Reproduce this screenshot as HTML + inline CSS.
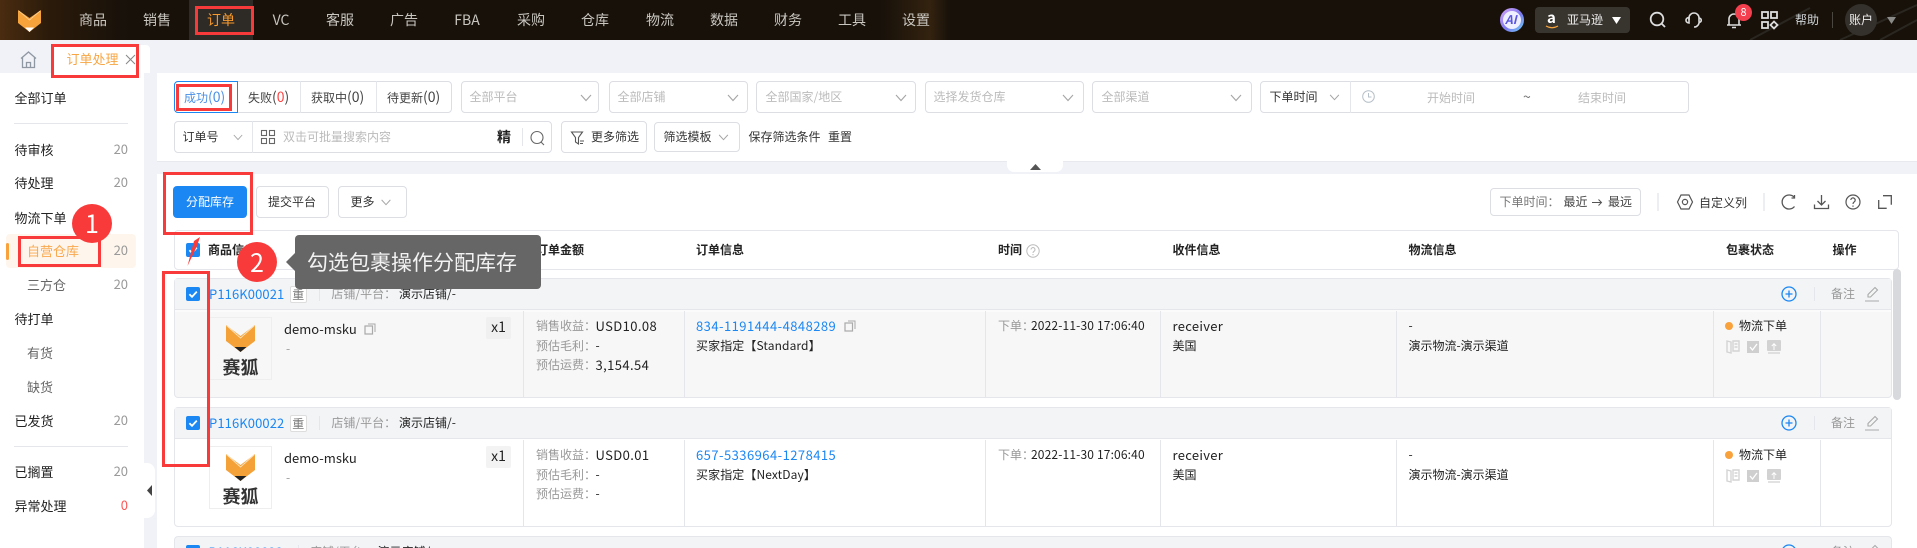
<!DOCTYPE html>
<html lang="zh"><head><meta charset="utf-8"><title>订单处理</title>
<style>
*{box-sizing:border-box}
html,body{margin:0;padding:0;width:1917px;height:548px;overflow:hidden;background:#fff}
body{position:relative;font:12px/20px "Noto Sans CJK SC","Liberation Sans",sans-serif;color:#222}
.a,.t,.n{position:absolute}
.t{white-space:nowrap;line-height:20px;height:20px}
.g{color:#999}.pg{color:#bbb}.b{font-weight:700}.l{color:#1b87f3}.f13{font-size:13px}
.n{top:10px;line-height:20px;font-size:14px;color:#c9c6c0;width:50px;text-align:center;white-space:nowrap}
.box{position:absolute;border:1px solid #dcdee4;border-radius:4px;background:#fff}
.sel{top:81px;height:32px}
.red{position:absolute;border:3px solid #f93a3a;z-index:5}
.sep{position:absolute;background:#e4e6eb;width:1px}
.hl{position:absolute;background:#e4e6eb;height:1px}
.num{position:absolute;left:100px;width:28px;text-align:right;color:#999;font-size:13px;line-height:20px}
svg{position:absolute;overflow:visible}
.p{font-size:14px}
.m{font-size:13px;letter-spacing:.4px}
.lk{font-size:13px;letter-spacing:.45px;color:#1b87f3}
</style></head><body>
<svg width="0" height="0" style="position:absolute"><defs>
<symbol id="ch" viewBox="0 0 12 8"><polyline points="1,1 6,6.5 11,1" fill="none" stroke="#a5a5a5" stroke-width="1.1"/></symbol>
<symbol id="ck" viewBox="0 0 14 14"><rect width="14" height="14" rx="2" fill="#1b87f3"/><polyline points="3.4,7.2 6,9.8 10.8,4.6" fill="none" stroke="#fff" stroke-width="1.8"/></symbol>
<symbol id="fox" viewBox="0 0 29 27"><polygon points="0,0 14.5,11 29,0 29,16 14.5,27 0,16" fill="#f4a137"/><polyline points="0.5,0.5 14.5,13 28.5,0.5" fill="none" stroke="#fbe0b8" stroke-width="1"/><polygon points="8.5,22 20.5,22 14.5,27" fill="#222"/></symbol>
<symbol id="cp" viewBox="0 0 12 12"><rect x="1" y="3" width="7.5" height="8" fill="none" stroke="#aaa" stroke-width="1.2"/><polyline points="4,1 11,1 11,9" fill="none" stroke="#aaa" stroke-width="1"/></symbol>
<symbol id="plus" viewBox="0 0 16 16"><circle cx="8" cy="8" r="7" fill="none" stroke="#1b87f3" stroke-width="1.3"/><path d="M4.5 8h7M8 4.5v7" stroke="#1b87f3" stroke-width="1.3"/></symbol>
<symbol id="pen" viewBox="0 0 14 16"><path d="M0 15h14M3 11V8.5L10 1.5l2.5 2.5-7 7z" fill="none" stroke="#aaa" stroke-width="1.1"/></symbol>
<symbol id="st" viewBox="0 0 55 14"><path d="M1 1l4 1v11l-4-1zM7 1h6v10H7zM8.500 4h3M8.500 7h3" fill="none" stroke="#d4d4d4" stroke-width="1.4"/><rect x="21" y="1" width="12" height="12" fill="#cfcfcf"/><polyline points="24,7 26.500,10 31,4" fill="none" stroke="#fff" stroke-width="1.300"/><rect x="41" y="0" width="14" height="11" rx="1" fill="#d2d2d2"/><path d="M48 10V4M45.800 6l2.200-2.300 2.200 2.300" fill="none" stroke="#fff" stroke-width="1"/><path d="M42 13h12" stroke="#d2d2d2" stroke-width="1.300"/></symbol>
</defs></svg>

<!-- top nav -->
<div class="a" style="left:0;top:0;width:1917px;height:40px;background:linear-gradient(90deg,#4a2c10 0,#2a1a0a 50px,#17110a 130px,#17110a 880px,#33220f 930px,#17110a 950px,#17110a 100%)"></div>
<svg style="left:1750px;top:0" width="167" height="40"><path d="M0 40L60 8M90 40L167 5M130 40L167 20" stroke="#2a2620" stroke-width="2" fill="none"/></svg>
<div class="a" style="left:189px;top:0;width:64px;height:40px;background:#2e2a25"></div>
<svg style="left:17.5px;top:10px" width="23" height="22" viewBox="0 0 23 22"><polygon points="0,0 11.500,8 23,0 23,13 11.500,22 0,13" fill="#f6a33c"/><polyline points="1,1 11.500,10 22,1" fill="none" stroke="#ffd9a0" stroke-width=".7"/><polygon points="7,17.500 16,17.500 11.500,22" fill="#fff"/></svg>
<div class="n" style="left:68px">商品</div><div class="n" style="left:132px">销售</div><div class="n" style="left:196px;color:#f59a2f">订单</div><div class="n" style="left:256px">VC</div><div class="n" style="left:315px">客服</div><div class="n" style="left:379px">广告</div><div class="n" style="left:442px">FBA</div><div class="n" style="left:506px">采购</div><div class="n" style="left:570px">仓库</div><div class="n" style="left:635px">物流</div><div class="n" style="left:699px">数据</div><div class="n" style="left:763px">财务</div><div class="n" style="left:827px">工具</div><div class="n" style="left:891px">设置</div>
<div class="red" style="left:195px;top:6px;width:59px;height:29px"></div>

<div class="a" style="left:1500px;top:8px;width:24px;height:24px;border-radius:50%;background:linear-gradient(135deg,#d9a6f5,#7b78f0 55%,#6fd3f5);"></div>
<div class="a" style="left:1503px;top:11px;width:18px;height:18px;border-radius:50%;background:#eef0ff"></div>
<div class="t b" style="left:1505px;top:10px;font-size:12px;color:#5a55e0;font-style:italic">AI</div>
<div class="a" style="left:1535px;top:7px;width:95px;height:26px;border-radius:4px;background:#38342e"></div>
<div class="t b" style="left:1547px;top:8px;font-size:15px;color:#fff">a</div>
<svg style="left:1545px;top:25px" width="14" height="5"><path d="M1 1q6 3.500 12 0" stroke="#f6a33c" stroke-width="1.300" fill="none"/></svg>
<div class="t" style="left:1567px;top:10px;color:#eee">亚马逊</div>
<svg style="left:1612px;top:17px" width="10" height="8"><polygon points="0,0 9,0 4.500,7" fill="#fff"/></svg>
<svg style="left:1649px;top:11px" width="18" height="18" fill="none" stroke="#ddd" stroke-width="1.800"><circle cx="8" cy="8" r="6.300"/><path d="M12.500 12.500L16 16"/></svg>
<svg style="left:1685px;top:11px" width="18" height="18" fill="none" stroke="#ddd" stroke-width="1.600"><path d="M4 9V7a5 5 0 0 1 10 0v3a5 5 0 0 1-5 6"/><path d="M4 6.500c-4 .5-4 5 0 5.500z"/><path d="M14 7c3 .5 3 4 0 4.500"/></svg>
<svg style="left:1725px;top:11px" width="18" height="18" fill="none" stroke="#ddd" stroke-width="1.600"><path d="M2 14h14M4 14V8a5 5 0 0 1 10 0v6M7 16.500h4"/></svg>
<div class="a" style="left:1735px;top:4px;width:17px;height:17px;border-radius:50%;background:#f43f4e;color:#fff;font-size:11px;line-height:16px;text-align:center">8</div>
<svg style="left:1761px;top:11px" width="18" height="19" fill="none" stroke="#ddd" stroke-width="1.800"><rect x="1" y="1" width="6" height="6"/><rect x="10" y="1" width="6" height="6"/><rect x="1" y="11" width="6" height="6"/><path d="M13 10.500l3.500 3.500-3.500 3.500-3.500-3.500z"/></svg>
<div class="t" style="left:1795px;top:10px;color:#cfd3d6">帮助</div>
<div class="a" style="left:1832px;top:12px;width:1px;height:16px;background:#4a4640"></div>
<div class="a" style="left:1845px;top:4px;width:32px;height:32px;border-radius:50%;background:#34302b"></div>
<div class="t" style="left:1849px;top:10px;color:#eee">账户</div>
<svg style="left:1887px;top:17px" width="10" height="8"><polygon points="0,0 9,0 4.500,7" fill="#8a8a88"/></svg>

<!-- tab bar -->
<div class="a" style="left:0;top:40px;width:1917px;height:33px;background:#f0f2f7"></div>
<svg style="left:20px;top:51px" width="17" height="18" fill="none" stroke="#8f97a3" stroke-width="1.300"><path d="M1 7.500L8.500 1 16 7.500M2.500 6.500V16.500h12V6.500"/><path d="M6.500 16.500v-5h4v5"/></svg>
<div class="a" style="left:52px;top:45px;width:98px;height:28px;background:#fff;border-radius:4px 4px 0 0"></div>
<div class="t f13" style="left:66.500px;top:49px;color:#f8a644">订单处理</div>
<svg style="left:126px;top:55px" width="9" height="9" stroke="#888" stroke-width="1"><path d="M0 0l9 9M9 0L0 9"/></svg>
<div class="red" style="left:51px;top:44px;width:88px;height:34px"></div>

<!-- layout blocks -->
<div class="a" style="left:144px;top:73px;width:13px;height:475px;background:#f0f2f7"></div>
<div class="a" style="left:157px;top:161px;width:1760px;height:13px;background:#f0f2f7;border-top:1px solid #e8e9ee"></div>
<div class="a" style="left:1007px;top:161px;width:56px;height:11px;background:#fff;border-radius:0 0 7px 7px"></div>
<svg style="left:1030px;top:164px" width="11" height="6"><polygon points="0,6 5.500,0 11,6" fill="#555"/></svg>

<!-- sidebar -->
<div class="t f13" style="left:14.500px;top:88px">全部订单</div>
<div class="hl" style="left:14px;top:123px;width:114px"></div>
<div class="t f13" style="left:14.500px;top:140px">待审核</div><div class="num" style="top:139px">20</div>
<div class="t f13" style="left:14.500px;top:173px">待处理</div><div class="num" style="top:172px">20</div>
<div class="t f13" style="left:14.500px;top:208px">物流下单</div>
<div class="a" style="left:6px;top:234px;width:130px;height:34px;background:#fef6ec;border-radius:4px"></div>
<div class="a" style="left:6px;top:243px;width:3px;height:17px;background:#f9a23c;border-radius:2px"></div>
<div class="t f13" style="left:27px;top:241px;color:#f9a84e">自营仓库</div><div class="num" style="top:240px">20</div>
<div class="t f13" style="left:27px;top:275px;color:#666">三方仓</div><div class="num" style="top:274px">20</div>
<div class="t f13" style="left:14.500px;top:309px">待打单</div>
<div class="t f13" style="left:27px;top:343px;color:#666">有货</div>
<div class="t f13" style="left:27px;top:377px;color:#666">缺货</div>
<div class="t f13" style="left:14.500px;top:411px">已发货</div><div class="num" style="top:410px">20</div>
<div class="hl" style="left:14px;top:446px;width:114px"></div>
<div class="t f13" style="left:14.500px;top:462px">已搁置</div><div class="num" style="top:461px">20</div>
<div class="t f13" style="left:14.500px;top:496px">异常处理</div><div class="num" style="top:495px;color:#f55">0</div>
<div class="a" style="left:144px;top:463px;width:11px;height:55px;background:#fff;border-radius:0 8px 8px 0"></div>
<svg style="left:147px;top:485px" width="5" height="11"><polygon points="5,0 0,5.500 5,11" fill="#444"/></svg>

<!-- filters row 1 -->
<div class="box sel" style="left:173.500px;width:278px"></div>
<div class="a" style="left:173.500px;top:81px;width:64.500px;height:32px;border:1px solid #1b87f3;border-radius:4px 0 0 4px"></div>
<div class="sep" style="left:300px;top:81px;height:32px"></div><div class="sep" style="left:376px;top:81px;height:32px"></div>
<div class="t" style="left:184px;top:87px;color:#4a90e8">成功<span class="p">(0)</span></div>
<div class="t" style="left:248px;top:87px;color:#444">失败<span class="p">(<span style="color:#f44">0</span>)</span></div>
<div class="t" style="left:311px;top:87px;color:#444">获取中<span class="p">(0)</span></div>
<div class="t" style="left:387px;top:87px;color:#444">待更新<span class="p">(0)</span></div>
<div class="red" style="left:175.500px;top:84px;width:56.500px;height:27px"></div>

<div class="box sel" style="left:460.500px;width:138.500px"></div><div class="t pg" style="left:469.500px;top:87px">全部平台</div><svg style="left:580px;top:94px" width="12" height="8"><use href="#ch"/></svg>
<div class="box sel" style="left:608.500px;width:139.500px"></div><div class="t pg" style="left:617.500px;top:87px">全部店铺</div><svg style="left:727px;top:94px" width="12" height="8"><use href="#ch"/></svg>
<div class="box sel" style="left:756px;width:159.500px"></div><div class="t pg" style="left:765.500px;top:87px">全部国家/地区</div><svg style="left:895px;top:94px" width="12" height="8"><use href="#ch"/></svg>
<div class="box sel" style="left:924.500px;width:159px"></div><div class="t pg" style="left:933.500px;top:87px">选择发货仓库</div><svg style="left:1062px;top:94px" width="12" height="8"><use href="#ch"/></svg>
<div class="box sel" style="left:1092px;width:159.500px"></div><div class="t pg" style="left:1101.500px;top:87px">全部渠道</div><svg style="left:1230px;top:94px" width="12" height="8"><use href="#ch"/></svg>
<div class="box sel" style="left:1260px;width:428.500px"></div><div class="t" style="left:1269.500px;top:87px;color:#333">下单时间</div><svg style="left:1329px;top:94px" width="11" height="7"><use href="#ch"/></svg>
<div class="sep" style="left:1349.500px;top:81px;height:32px"></div>
<svg style="left:1361.500px;top:90px" width="13" height="13" fill="none" stroke="#b6c0c8"><circle cx="6.500" cy="6.500" r="5.800"/><path d="M6.500 3v4h3"/></svg>
<div class="t pg" style="left:1427px;top:87.500px">开始时间</div><div class="t" style="left:1523px;top:87px;color:#777;font-size:14px">~</div><div class="t pg" style="left:1578px;top:87.500px">结束时间</div>

<!-- filters row 2 -->
<div class="box" style="left:173.500px;top:121px;width:378.500px;height:32px"></div>
<div class="t" style="left:182.500px;top:127px;color:#333;font-size:12px">订单号</div><svg style="left:233px;top:134px" width="10" height="7"><use href="#ch"/></svg>
<div class="sep" style="left:252px;top:121px;height:32px"></div>
<svg style="left:261px;top:130px" width="14" height="14" fill="none" stroke="#666" stroke-width="1.100"><rect x=".5" y=".5" width="5" height="5"/><rect x="8.500" y=".5" width="5" height="5"/><rect x=".5" y="8.500" width="5" height="5"/><rect x="8.500" y="8.500" width="5" height="5"/></svg>
<div class="t pg" style="left:283px;top:127px">双击可批量搜索内容</div>
<div class="t b" style="left:497px;top:127px;font-size:14px;color:#222">精</div>
<div class="sep" style="left:522px;top:128px;height:18px"></div>
<svg style="left:530px;top:131px" width="15" height="15" fill="none" stroke="#666" stroke-width="1.100"><circle cx="7" cy="6.500" r="6"/><path d="M11 11l3 3"/></svg>
<div class="box" style="left:561px;top:121px;width:85.500px;height:32px"></div>
<svg style="left:570.500px;top:131px" width="13" height="14" fill="none" stroke="#555" stroke-width="1.100"><path d="M.5 1h11L7.500 6.500V13L4.500 11V6.500z"/><path d="M9 10h4M9 12.500h3"/></svg>
<div class="t" style="left:591px;top:127px;color:#333">更多筛选</div>
<div class="box" style="left:654px;top:122px;width:85.500px;height:30px"></div>
<div class="t" style="left:663.500px;top:127px;color:#333">筛选模板</div><svg style="left:718px;top:134px" width="11" height="7"><use href="#ch"/></svg>
<div class="t" style="left:748.500px;top:127px;color:#333">保存筛选条件</div>
<div class="t" style="left:828px;top:127px;color:#333">重置</div>

<!-- actions -->
<div class="a" style="left:173px;top:186px;width:74px;height:32px;background:#1b87f3;border-radius:4px;color:#fff;text-align:center;line-height:31px">分配库存</div>
<div class="box" style="left:255.500px;top:186px;width:73px;height:32px;text-align:center;line-height:30px;color:#333">提交平台</div>
<div class="box" style="left:337.500px;top:186px;width:69px;height:32px;line-height:30px;color:#333;padding-left:12px">更多</div>
<svg style="left:380px;top:199px" width="12" height="7"><use href="#ch"/></svg>
<div class="red" style="left:162.500px;top:172px;width:90.500px;height:63px"></div>

<div class="box" style="left:1490px;top:188px;width:150.500px;height:28px"></div>
<div class="t" style="left:1499.500px;top:192px;color:#777">下单时间：</div>
<div class="t" style="left:1563.500px;top:192px;color:#444">最近</div>
<svg style="left:1592px;top:198px" width="11" height="9" fill="none" stroke="#555"><path d="M0 4.500h9.500M6.500 1.500l3 3-3 3"/></svg>
<div class="t" style="left:1608px;top:192px;color:#444">最远</div>
<div class="a" style="left:1657px;top:193px;width:2px;height:18px;background:#eceef1"></div>
<svg style="left:1677px;top:194px" width="16" height="16" fill="none" stroke="#555" stroke-width="1.200"><path d="M4 1h8l3.500 7-3.500 7H4L.5 8z"/><circle cx="8" cy="8" r="2.600"/></svg>
<div class="t" style="left:1699px;top:193px;color:#333">自定义列</div>
<div class="a" style="left:1763px;top:193px;width:2px;height:18px;background:#eceef1"></div>
<svg style="left:1781px;top:194px" width="15" height="16" fill="none" stroke="#555" stroke-width="1.300"><path d="M13.500 3.500A7 7 0 1 0 13.500 12.500"/><path d="M13.500 1v3h-3"/></svg>
<svg style="left:1814px;top:194px" width="15" height="16" fill="none" stroke="#555" stroke-width="1.300"><path d="M7.500 1v9.500M3.500 7l4 4 4-4M.5 10.500v4h14v-4"/></svg>
<svg style="left:1845px;top:194px" width="16" height="16" fill="none" stroke="#555" stroke-width="1.200"><circle cx="8" cy="8" r="7"/><path d="M5.800 6a2.200 2.200 0 1 1 3.300 2c-.8.500-1.100 1-1.100 2"/><path d="M8 11.500v1.300"/></svg>
<svg style="left:1878px;top:195px" width="14" height="14" fill="none" stroke="#555" stroke-width="1.300"><path d="M5 .7h8.300v9M.7 5v8.300h8"/></svg>

<!-- table header -->
<div class="box" style="left:173.500px;top:230px;width:1725.500px;height:40px;border-color:#e4e6eb"></div>
<svg style="left:186px;top:243px" width="14" height="14"><use href="#ck"/></svg>
<div class="t b" style="left:208px;top:240px">商品信息</div>
<div class="t b" style="left:536px;top:240px">订单金额</div>
<div class="t b" style="left:696px;top:240px">订单信息</div>
<div class="t b" style="left:998px;top:240px">时间</div>
<svg style="left:1025.500px;top:243.500px" width="14" height="14" fill="none" stroke="#bbb"><circle cx="7" cy="7" r="6.200"/><path d="M5 5.500a2 2 0 1 1 3 1.800c-.7.400-1 .8-1 1.700M7 10v1.200"/></svg>
<div class="t b" style="left:1172.500px;top:240px">收件信息</div>
<div class="t b" style="left:1408.500px;top:240px">物流信息</div>
<div class="t b" style="left:1726px;top:240px">包裹状态</div>
<div class="t b" style="left:1832.500px;top:240px">操作</div>

<!-- scrollbar -->
<div class="a" style="left:1893px;top:269px;width:8px;height:131px;background:#d8d9dd;border-radius:4px"></div>

<!-- card 1 -->
<div class="box" style="left:173.500px;top:278px;width:1718px;height:120px;background:#f7f7f7;border-color:#e4e6eb"></div>
<div class="a" style="left:174.500px;top:279px;width:1716px;height:31px;background:#f3f4f6;border-bottom:1px solid #e4e6eb"></div>
<div class="a" style="left:174.500px;top:310px;width:1716px;height:2px;background:#fbfbfb"></div>
<svg style="left:186px;top:287px" width="14" height="14"><use href="#ck"/></svg>
<div class="t f13 l" style="left:209px;top:284px;letter-spacing:.1px">P116K00021</div>
<div class="a" style="left:289.500px;top:286px;width:17.500px;height:17px;border:1px solid #ddd;border-radius:2px;background:#fff;text-align:center;line-height:15px;color:#777">重</div>
<div class="sep" style="left:319px;top:287px;height:14px"></div>
<div class="t g" style="left:331.400px;top:284px">店铺/平台：</div><div class="t" style="left:399px;top:284px">演示店铺/-</div>
<svg style="left:1781px;top:286px" width="16" height="16"><use href="#plus"/></svg>
<div class="sep" style="left:1814px;top:287px;height:14px"></div>
<div class="t g" style="left:1831px;top:284px">备注</div>
<svg style="left:1865px;top:286px" width="14" height="16"><use href="#pen"/></svg>
<div class="sep" style="left:523px;top:311px;height:86px"></div><div class="sep" style="left:683.500px;top:311px;height:86px"></div><div class="sep" style="left:985px;top:311px;height:86px"></div><div class="sep" style="left:1159.500px;top:311px;height:86px"></div><div class="sep" style="left:1395.500px;top:311px;height:86px"></div><div class="sep" style="left:1712.700px;top:311px;height:86px"></div><div class="sep" style="left:1819.700px;top:311px;height:86px"></div>
<div class="a" style="left:208.500px;top:317px;width:63px;height:63px;border:1px solid #eee"></div>
<svg style="left:226px;top:325px" width="29" height="27"><use href="#fox"/></svg>
<div class="t b" style="left:222.500px;top:356px;font-size:18px;color:#333;line-height:22px">赛狐</div>
<div class="t f13" style="left:284px;top:319px">demo-msku</div>
<svg style="left:364px;top:323px" width="12" height="12"><use href="#cp"/></svg>
<div class="t g" style="left:286px;top:339px">-</div>
<div class="a" style="left:486px;top:317px;width:25px;height:22px;background:#f0f0f0;border-radius:2px;text-align:center;line-height:21px;font-size:14px">x1</div>
<div class="t g" style="left:536px;top:316px">销售收益：</div><div class="t m" style="left:595.500px;top:316px">USD10.08</div>
<div class="t g" style="left:536px;top:336px">预估毛利：</div><div class="t" style="left:595.500px;top:336px">-</div>
<div class="t g" style="left:536px;top:355px">预估运费：</div><div class="t m" style="left:595.500px;top:355px">3,154.54</div>
<div class="t lk" style="left:696px;top:316px">834-1191444-4848289</div>
<svg style="left:844px;top:320px" width="12" height="12"><use href="#cp"/></svg>
<div class="t" style="left:696px;top:336px;letter-spacing:.1px">买家指定【Standard】</div>
<div class="t g" style="left:998px;top:316px">下单：</div><div class="t" style="left:1031px;top:316px;letter-spacing:.15px">2022-11-30 17:06:40</div>
<div class="t f13" style="left:1172.500px;top:316px;letter-spacing:.3px">receiver</div><div class="t" style="left:1172.500px;top:336px">美国</div>
<div class="t" style="left:1408.500px;top:316px">-</div><div class="t" style="left:1408.500px;top:336px">演示物流-演示渠道</div>
<div class="a" style="left:1725px;top:322px;width:8px;height:8px;border-radius:50%;background:#f9a23c"></div>
<div class="t" style="left:1739px;top:316px">物流下单</div>
<svg style="left:1726px;top:340px" width="55" height="14"><use href="#st"/></svg>

<!-- card 2 -->
<div class="box" style="left:173.500px;top:407px;width:1718px;height:120px;border-color:#e4e6eb"></div>
<div class="a" style="left:174.500px;top:408px;width:1716px;height:31px;background:#f3f4f6;border-bottom:1px solid #e4e6eb"></div>
<svg style="left:186px;top:416px" width="14" height="14"><use href="#ck"/></svg>
<div class="t f13 l" style="left:209px;top:413px;letter-spacing:.1px">P116K00022</div>
<div class="a" style="left:289.500px;top:415px;width:17.500px;height:17px;border:1px solid #ddd;border-radius:2px;background:#fff;text-align:center;line-height:15px;color:#777">重</div>
<div class="sep" style="left:319px;top:416px;height:14px"></div>
<div class="t g" style="left:331.400px;top:413px">店铺/平台：</div><div class="t" style="left:399px;top:413px">演示店铺/-</div>
<svg style="left:1781px;top:415px" width="16" height="16"><use href="#plus"/></svg>
<div class="sep" style="left:1814px;top:416px;height:14px"></div>
<div class="t g" style="left:1831px;top:413px">备注</div>
<svg style="left:1865px;top:415px" width="14" height="16"><use href="#pen"/></svg>
<div class="sep" style="left:523px;top:440px;height:86px"></div><div class="sep" style="left:683.500px;top:440px;height:86px"></div><div class="sep" style="left:985px;top:440px;height:86px"></div><div class="sep" style="left:1159.500px;top:440px;height:86px"></div><div class="sep" style="left:1395.500px;top:440px;height:86px"></div><div class="sep" style="left:1712.700px;top:440px;height:86px"></div><div class="sep" style="left:1819.700px;top:440px;height:86px"></div>
<div class="a" style="left:208.500px;top:446px;width:63px;height:63px;border:1px solid #eee"></div>
<svg style="left:226px;top:454px" width="29" height="27"><use href="#fox"/></svg>
<div class="t b" style="left:222.500px;top:485px;font-size:18px;color:#333;line-height:22px">赛狐</div>
<div class="t f13" style="left:284px;top:448px">demo-msku</div>
<div class="t g" style="left:286px;top:468px">-</div>
<div class="a" style="left:486px;top:446px;width:25px;height:22px;background:#f3f3f3;border-radius:2px;text-align:center;line-height:21px;font-size:14px">x1</div>
<div class="t g" style="left:536px;top:445px">销售收益：</div><div class="t m" style="left:595.500px;top:445px">USD0.01</div>
<div class="t g" style="left:536px;top:465px">预估毛利：</div><div class="t" style="left:595.500px;top:465px">-</div>
<div class="t g" style="left:536px;top:484px">预估运费：</div><div class="t" style="left:595.500px;top:484px">-</div>
<div class="t lk" style="left:696px;top:445px">657-5336964-1278415</div>
<div class="t" style="left:696px;top:465px;letter-spacing:.1px">买家指定【NextDay】</div>
<div class="t g" style="left:998px;top:445px">下单：</div><div class="t" style="left:1031px;top:445px;letter-spacing:.15px">2022-11-30 17:06:40</div>
<div class="t f13" style="left:1172.500px;top:445px;letter-spacing:.3px">receiver</div><div class="t" style="left:1172.500px;top:465px">美国</div>
<div class="t" style="left:1408.500px;top:445px">-</div><div class="t" style="left:1408.500px;top:465px">演示物流-演示渠道</div>
<div class="a" style="left:1725px;top:451px;width:8px;height:8px;border-radius:50%;background:#f9a23c"></div>
<div class="t" style="left:1739px;top:445px">物流下单</div>
<svg style="left:1726px;top:469px" width="55" height="14"><use href="#st"/></svg>

<!-- card 3 -->
<div class="a" style="left:173.500px;top:536px;width:1718px;height:12px;background:#f3f4f6;border:1px solid #e4e6eb;border-bottom:0;border-radius:4px 4px 0 0;overflow:hidden"></div>
<svg style="left:186px;top:545px" width="14" height="14"><use href="#ck"/></svg>
<div class="t f13 l" style="left:208.500px;top:542px">P116K00023</div>
<div class="sep" style="left:297.500px;top:545px;height:3px"></div>
<div class="t g" style="left:310px;top:542px">店铺/平台：</div><div class="t" style="left:377.500px;top:542px">演示店铺/-</div>
<svg style="left:1781px;top:544px" width="16" height="16"><use href="#plus"/></svg>
<div class="t g" style="left:1831px;top:542px">备注</div>
<svg style="left:1865px;top:544px" width="14" height="16"><use href="#pen"/></svg>

<!-- annotations -->
<div class="red" style="left:18px;top:236px;width:83px;height:31px"></div>
<div class="a" style="left:72px;top:204px;width:40px;height:39px;border-radius:50%;background:#f93a3a;color:#fff;font-size:25px;line-height:39px;text-align:center;z-index:6">1</div>
<div class="red" style="left:161.500px;top:271px;width:48.500px;height:196px"></div>
<svg style="left:0;top:0;z-index:6" width="300" height="300"><polygon points="200,237 194,241 187.500,266 197,246" fill="#f93a3a"/></svg>
<div class="a" style="left:295px;top:235px;width:246px;height:54px;background:#666;border-radius:4px;z-index:6"></div>
<svg style="left:286px;top:252px;z-index:6" width="10" height="20"><polygon points="10,0 0,10 10,20" fill="#666"/></svg>
<div class="t" style="left:307px;top:250px;font-size:21px;line-height:24px;height:24px;color:#f2f2f2;z-index:7">勾选包裹操作分配库存</div>
<div class="a" style="left:237px;top:242px;width:40px;height:40px;border-radius:50%;background:#f93a3a;color:#fff;font-size:25px;line-height:40px;text-align:center;z-index:7">2</div>
</body></html>
